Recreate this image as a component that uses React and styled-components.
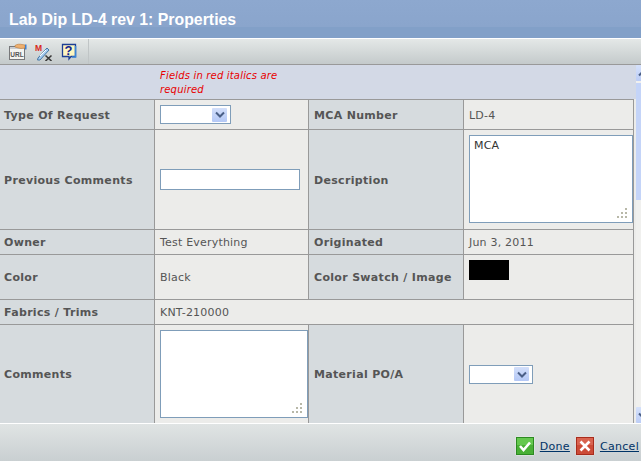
import React from 'react'
import styled, { createGlobalStyle } from 'styled-components'

const GlobalStyle = createGlobalStyle`
  html, body {
    margin: 0;
    padding: 0;
    background: #d3d9dc;
  }
  * {
    box-sizing: border-box;
  }
`

const Chevron = ({ up }) => (
  <svg width='10' height='7' viewBox='0 0 10 7'>
    <path d={up ? 'M1 5.5 L5 1.5 L9 5.5' : 'M1 1.5 L5 5.5 L9 1.5'} fill='none' stroke='#4a5f86' strokeWidth='2' />
  </svg>
)

const UrlIcon = () => (
  <svg width='18' height='18' viewBox='0 0 18 18'>
    <rect x='0.5' y='3.5' width='15' height='13' fill='#f4f4f0' stroke='#77787a' />
    <rect x='1' y='4' width='14' height='2' fill='#c9ccd0' />
    <text x='8' y='14' textAnchor='middle' fontFamily='"Liberation Sans", sans-serif' fontSize='6.5' fontWeight='700' fill='#555'>URL</text>
    <path d='M6 2.5 C8 1 11 1 13 1.5 L16 2 L16 5 L12 5.5 C10 5.5 8 4.5 6 4 Z' fill='#eeb070' stroke='#b97a3c' strokeWidth='0.6' />
    <rect x='16' y='1.5' width='1.5' height='5' fill='#3d7fd0' />
  </svg>
)

const MxIcon = () => (
  <svg width='18' height='18' viewBox='0 0 18 18'>
    <text x='0' y='7.5' fontFamily='"Liberation Sans", sans-serif' fontSize='8.5' fontWeight='700' fill='#d82a1c'>M</text>
    <path d='M3 15 L12 5 L14 7 L5 17 L2.5 17 Z' fill='#a8cdf0' stroke='#4478a8' strokeWidth='1' />
    <path d='M5 13 L11 7' stroke='#ffffff' strokeWidth='1' />
    <path d='M10.5 12.5 L16.5 18 M16.5 12.5 L10.5 18' stroke='#3a3a3a' strokeWidth='1.6' />
  </svg>
)

const HelpIcon = () => (
  <svg width='16' height='18' viewBox='0 0 16 18'>
    <path d='M1.5 1.5 H14.5 V13.5 H10 L8 16 V13.5 H1.5 Z' fill='#fff6c0' stroke='#1d3f95' strokeWidth='1.3' />
    <path d='M14.5 3 V14 H11' fill='none' stroke='#3b86d8' strokeWidth='1.6' />
    <text x='7.5' y='12' textAnchor='middle' fontFamily='"Liberation Sans", sans-serif' fontSize='13' fontWeight='700' fill='#101f90'>?</text>
  </svg>
)

const DoneIcon = () => (
  <svg width='20' height='20' viewBox='0 0 20 20'>
    <rect x='0.5' y='0.5' width='19' height='19' rx='1.5' fill='#e8eee8' />
    <rect x='1.5' y='1.5' width='17' height='17' fill='#49b036' stroke='#2c8a22' />
    <rect x='2' y='2' width='16' height='7' fill='#64c84e' />
    <path d='M5 10 L8.5 14 L15 6.5' fill='none' stroke='#ffffff' strokeWidth='2.6' />
  </svg>
)

const CancelIcon = () => (
  <svg width='20' height='20' viewBox='0 0 20 20'>
    <rect x='0.5' y='0.5' width='19' height='19' rx='1.5' fill='#ecdcd8' />
    <rect x='1.5' y='1.5' width='17' height='17' fill='#cc4b37' stroke='#a82c1c' />
    <rect x='2' y='2' width='16' height='7' fill='#d9634f' />
    <path d='M5.5 5.5 L14.5 14.5 M14.5 5.5 L5.5 14.5' stroke='#ffffff' strokeWidth='2.6' />
  </svg>
)

const Grip = () => (
  <GripMark width='11' height='11' viewBox='0 0 11 11'>
    <path d='M8 0h2v2H8z M4 4h2v2H4z M8 4h2v2H8z M0 8h2v2H0z M4 8h2v2H4z M8 8h2v2H8z' fill='#b8b8a8' />
  </GripMark>
)

const App = () => {
  return (
    <Page>
      <GlobalStyle />
      <TitleBar>Lab Dip LD-4 rev 1: Properties</TitleBar>
      <Toolbar>
        <ToolGroup>
          <UrlIcon />
          <MxIcon />
          <HelpIcon />
        </ToolGroup>
      </Toolbar>
      <Body>
        <Sheet>
          <Notice>
            <NoticeText>Fields in red italics are required</NoticeText>
          </Notice>
          <FormGrid>
            <Label>Type Of Request</Label>
            <Value>
              <SelectBox $width={71}>
                <SelectArrow><Chevron /></SelectArrow>
              </SelectBox>
            </Value>
            <Label>MCA Number</Label>
            <Value><ValueText>LD-4</ValueText></Value>

            <Label>Previous Comments</Label>
            <Value>
              <TextInput readOnly />
            </Value>
            <Label>Description</Label>
            <Value $top>
              <AreaWrap $width={164}>
                <TextArea readOnly defaultValue='MCA' />
                <Grip />
              </AreaWrap>
            </Value>

            <Label>Owner</Label>
            <Value><ValueText>Test Everything</ValueText></Value>
            <Label>Originated</Label>
            <Value><ValueText>Jun 3, 2011</ValueText></Value>

            <Label>Color</Label>
            <Value><ValueText>Black</ValueText></Value>
            <Label>Color Swatch / Image</Label>
            <Value $top>
              <Swatch />
            </Value>

            <Label>Fabrics / Trims</Label>
            <Value $span={3}><ValueText>KNT-210000</ValueText></Value>

            <Label>Comments</Label>
            <Value>
              <AreaWrap $width={148}>
                <TextArea readOnly />
                <Grip />
              </AreaWrap>
            </Value>
            <Label>Material PO/A</Label>
            <Value>
              <SelectBox $width={64}>
                <SelectArrow><Chevron /></SelectArrow>
              </SelectBox>
            </Value>
          </FormGrid>
        </Sheet>
        <Scrollbar>
          <ScrollButton><Chevron up /></ScrollButton>
          <ScrollTrack>
            <ScrollThumb />
          </ScrollTrack>
          <ScrollButton><Chevron /></ScrollButton>
        </Scrollbar>
      </Body>
      <Footer>
        <Action>
          <DoneIcon />
          <ActionLink href='#'>Done</ActionLink>
        </Action>
        <Action>
          <CancelIcon />
          <ActionLink href='#'>Cancel</ActionLink>
        </Action>
      </Footer>
    </Page>
  )
}

export default App

const Page = styled.div`
  width: 641px;
  height: 461px;
  display: flex;
  flex-direction: column;
  overflow: hidden;
  font-family: 'DejaVu Sans', Verdana, sans-serif;
  font-size: 11px;
  color: #555;
`
const TitleBar = styled.div`
  height: 38px;
  flex: none;
  padding: 11px 0 0 9px;
  background: linear-gradient(to bottom, #8da8cf 0, #8aa5cc 27px, #82a0c8 27px, #82a0c8 38px);
  color: #fff;
  font-family: 'Liberation Sans', Arial, sans-serif;
  font-size: 15.85px;
  font-weight: 700;
  line-height: 17px;
`
const Toolbar = styled.div`
  height: 27px;
  flex: none;
  padding-left: 9px;
  display: flex;
  align-items: stretch;
  border-top: 1px solid #fff;
  border-bottom: 1px solid #999;
  background: linear-gradient(to bottom, #e4e8e7, #c4cacb);
`
const ToolGroup = styled.div`
  width: 80px;
  display: flex;
  align-items: center;
  gap: 8px;
  border-right: 1px solid #c0c5c6;
`
const Body = styled.div`
  height: 358px;
  flex: none;
  display: flex;
  overflow: hidden;
  background: #ececea;
`
const Sheet = styled.div`
  width: 634px;
  flex: none;
`
const Notice = styled.div`
  height: 35px;
  padding: 4px 0 0 160px;
  border-bottom: 1px solid #999;
  background: #d3d9e6;
`
const NoticeText = styled.div`
  width: 130px;
  color: #e80000;
  font-size: 10px;
  font-style: italic;
  letter-spacing: 0.18px;
  line-height: 14px;
`
const FormGrid = styled.div`
  display: grid;
  grid-template-columns: 156px 154px 155px 170px;
  grid-template-rows: 30px 100px 25px 45px 25px 99px;
  margin-left: -1px;
`
const Label = styled.div`
  display: flex;
  align-items: center;
  padding: 1px 0 0 5px;
  border-right: 1px solid #999;
  border-bottom: 1px solid #999;
  background: #d6dbde;
  color: #555;
  font-weight: 700;
  letter-spacing: 0.32px;
  white-space: nowrap;
`
const Value = styled.div`
  display: flex;
  align-items: ${(props) => (props.$top ? 'flex-start' : 'center')};
  padding: ${(props) => (props.$top ? '5px 0 0 5px' : '0 0 0 5px')};
  grid-column: span ${(props) => props.$span || 1};
  border-right: 1px solid #999;
  border-bottom: 1px solid #999;
  background: #ececea;
  white-space: nowrap;
`
const ValueText = styled.span`
  padding-top: 1px;
  color: #555;
  letter-spacing: 0.2px;
`
const SelectBox = styled.div`
  width: ${(props) => props.$width}px;
  height: 19px;
  padding-right: 3px;
  display: flex;
  align-items: center;
  justify-content: flex-end;
  border: 1px solid #7f9db9;
  background: #fff;
`
const SelectArrow = styled.div`
  width: 15px;
  height: 14px;
  display: flex;
  align-items: center;
  justify-content: center;
  border-radius: 1px;
  background: linear-gradient(to bottom, #d3dffa, #b4c8f6);
`
const TextInput = styled.input`
  width: 140px;
  height: 21px;
  padding: 0 4px;
  border: 1px solid #7f9db9;
  background: #fff;
  outline: none;
`
const AreaWrap = styled.div`
  position: relative;
  width: ${(props) => props.$width}px;
  height: 88px;
`
const TextArea = styled.textarea`
  display: block;
  width: 100%;
  height: 100%;
  padding: 3px 4px;
  border: 1px solid #7f9db9;
  outline: none;
  resize: none;
  background: #fff;
  color: #333;
  font-family: 'DejaVu Sans', Verdana, sans-serif;
  font-size: 11px;
  letter-spacing: 0.2px;
  line-height: 13px;
`
const GripMark = styled.svg`
  position: absolute;
  right: 5px;
  bottom: 4px;
`
const Swatch = styled.div`
  width: 40px;
  height: 20px;
  background: #000;
`
const Scrollbar = styled.div`
  width: 7px;
  flex: none;
  padding-left: 2px;
  display: flex;
  flex-direction: column;
  overflow: hidden;
  background: linear-gradient(to bottom, #d3d9e6 34px, #ececea 34px);
`
const ScrollButton = styled.div`
  width: 16px;
  height: 16px;
  flex: none;
  padding-left: 2px;
  display: flex;
  align-items: center;
  border-radius: 1px;
  background: linear-gradient(to bottom, #d5e1fb, #bccdf6);
`
const ScrollTrack = styled.div`
  flex: 1;
  padding: 2px 0;
  background: #f0f0ee;
`
const ScrollThumb = styled.div`
  width: 16px;
  height: 117px;
  background: #c4d4f8;
`
const Footer = styled.div`
  height: 38px;
  flex: none;
  padding: 12px 2px 0 0;
  display: flex;
  justify-content: flex-end;
  gap: 5px;
  border-top: 1px solid #fff;
  background: linear-gradient(to bottom, #e0e4e4, #c9cfd1);
`
const Action = styled.div`
  height: 20px;
  display: flex;
  align-items: center;
  gap: 5px;
`
const ActionLink = styled.a`
  color: #003366;
  font-size: 11px;
  letter-spacing: 0.3px;
  text-decoration: underline;
`
